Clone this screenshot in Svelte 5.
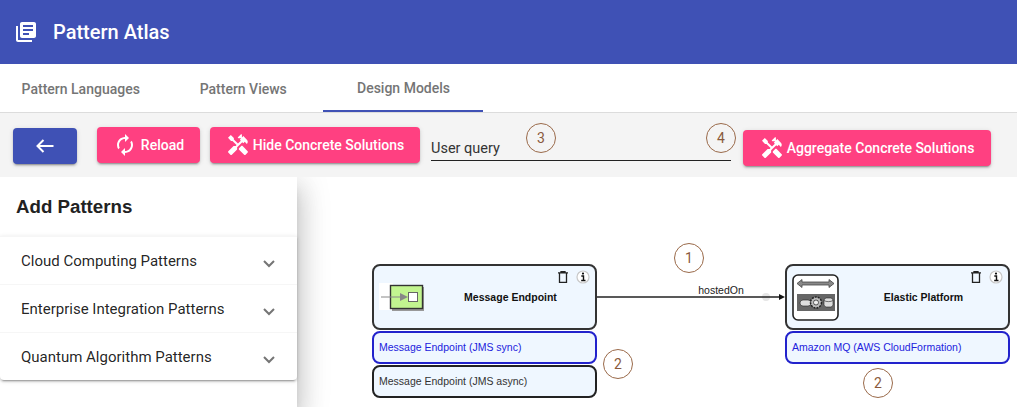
<script>
  const tabs = ['Pattern Languages', 'Pattern Views', 'Design Models']
  const groups = ['Cloud Computing Patterns', 'Enterprise Integration Patterns', 'Quantum Algorithm Patterns']

  const handyman = 'M21.67 18.17l-5.3-5.3h-.99l-2.54 2.54v.99l5.3 5.3c.39.39 1.02.39 1.41 0l2.12-2.12c.39-.38.39-1.02 0-1.41zM17.34 10.19l1.41-1.41 2.12 2.12c1.17-1.17 1.17-3.07 0-4.24l-3.54-3.54-1.41 1.41V1.71l-.7-.71-3.54 3.54.71.71h2.83l-1.41 1.41 1.06 1.06-2.89 2.89-4.13-4.13V5.06L4.83 2.04 2 4.87 5.03 7.9h1.41l4.13 4.13-.85.85H7.6l-5.3 5.3c-.39.39-.39 1.02 0 1.41l2.12 2.12c.39.39 1.02.39 1.41 0l5.3-5.3v-2.12l5.15-5.15 1.06 1.05z'
</script>

{#snippet nodeActions()}
  <div class="node-actions">
    <svg width="10" height="12" viewBox="0 0 10 12"><path d="M0 1.800h10M3 1.800V.5h4v1.300M1.500 1.800v9.500h7V1.800" fill="none" stroke="#222" stroke-width="1.300"/></svg>
    <svg width="14" height="14" viewBox="0 0 14 14"><circle cx="7" cy="7" r="6" fill="#fff" stroke="#c8c8c8" stroke-width="1.200"/><path d="M5.300 6h2.200v4.300M5.200 10.500h4.300" fill="none" stroke="#111" stroke-width="1.400"/><circle cx="7" cy="3.600" r="1.100" fill="#111"/></svg>
  </div>
{/snippet}

<header class="topbar">
  <svg width="24" height="24" viewBox="0 0 24 24" fill="#fff"><path d="M4 6H2v14c0 1.1.9 2 2 2h14v-2H4V6zm16-4H8c-1.1 0-2 .9-2 2v12c0 1.1.9 2 2 2h12c1.1 0 2-.9 2-2V4c0-1.1-.9-2-2-2zm-1 9H9V9h10v2zm-4 4H9v-2h6v2zm4-8H9V5h10v2z"/></svg>
  <span class="title">Pattern Atlas</span>
</header>

<nav class="tabs">
  {#each tabs as tab, i}
    <div class="tab" class:active={i === 2}>{tab}</div>
  {/each}
</nav>

<div class="toolbar">
  <button class="btn back" aria-label="Back">
    <svg width="20" height="16" viewBox="0 0 20 16"><path d="M18.500 8H2.500M8.500 2l-6 6 6 6" fill="none" stroke="#fff" stroke-width="2"/></svg>
  </button>
  <button class="btn pink reload">
    <svg width="24" height="24" viewBox="0 0 24 24" fill="#fff"><path d="M12 6v3l4-4-4-4v3c-4.420 0-8 3.580-8 8 0 1.570.460 3.030 1.240 4.260L6.700 14.800c-.450-.830-.700-1.790-.700-2.800 0-3.310 2.690-6 6-6zm6.760 1.740L17.300 9.200c.440.840.700 1.790.700 2.800 0 3.310-2.690 6-6 6v-3l-4 4 4 4v-3c4.420 0 8-3.580 8-8 0-1.570-.460-3.030-1.240-4.260z"/></svg>
    Reload
  </button>
  <button class="btn pink hide">
    <svg width="24" height="24" viewBox="0 0 24 24" fill="#fff"><path d={handyman}/></svg>
    Hide Concrete Solutions
  </button>
  <div class="query">
    <span>User query</span>
    <div class="step" style="left: 95px; top: -5px">3</div>
    <div class="step" style="left: 275px; top: -5px">4</div>
  </div>
  <button class="btn pink aggregate">
    <svg width="24" height="24" viewBox="0 0 24 24" fill="#fff"><path d={handyman}/></svg>
    Aggregate Concrete Solutions
  </button>
</div>

<main class="workspace">
  <aside class="drawer">
    <h3>Add Patterns</h3>
    <div class="accordion">
      {#each groups as group}
        <div class="panel">
          <span>{group}</span>
          <svg width="12" height="8" viewBox="0 0 12 8"><path d="M1 1l5 5 5-5" fill="none" stroke="#757575" stroke-width="2"/></svg>
        </div>
      {/each}
    </div>
  </aside>

  <!-- diagram canvas, nodes are placed freely -->
  <section class="canvas">
    <svg class="edge" width="1017" height="230" viewBox="0 0 1017 230">
      <circle cx="766" cy="120" r="4" fill="#e6e6e6"/>
      <path d="M596 120H779" stroke="#222" stroke-width="1.300"/>
      <path d="M779 117l6 3-6 3z" fill="#111"/>
      <text x="721" y="117" text-anchor="middle">hostedOn</text>
    </svg>

    <div class="node-group" style="left: 372px; top: 87px">
      <div class="node">
        <svg class="pattern-icon" width="46" height="30" viewBox="0 0 46 30">
          <rect x="0" y="0" width="14" height="27" fill="#fff"/>
          <rect x="13" y="4" width="32" height="24" fill="#999"/>
          <rect x="11.500" y="2.500" width="32" height="23" fill="#c2f590" stroke="#333" stroke-width="1.400"/>
          <path d="M2 14H24" stroke="#888" stroke-width="1"/>
          <path d="M21 10l8 4-8 4z" fill="#888"/>
          <rect x="29.500" y="9.500" width="9" height="9" fill="#fff" stroke="#666"/>
        </svg>
        <b>Message Endpoint</b>
        {@render nodeActions()}
      </div>
      <div class="sub blue">Message Endpoint (JMS sync)</div>
      <div class="sub">Message Endpoint (JMS async)</div>
    </div>

    <div class="node-group" style="left: 785px; top: 87px">
      <div class="node">
        <svg class="pattern-icon elastic" width="47" height="47" viewBox="0 0 47 47">
          <rect x="1" y="1" width="45" height="45" rx="5" fill="#fff" stroke="#222" stroke-width="1.600"/>
          <path d="M5 9.500l5-4v2.500h27V5.500l5 4-5 4V11H10v2.500z" fill="#888" stroke="#444" stroke-width=".8"/>
          <rect x="5" y="20" width="38" height="17" fill="#666"/>
          <rect x="8" y="26" width="11" height="6" rx="3" fill="#ddd" stroke="#222" stroke-width=".6"/>
          <circle cx="24" cy="28.500" r="5.500" fill="#bbb" stroke="#222" stroke-width="1.500" stroke-dasharray="2 1"/>
          <circle cx="24" cy="28.500" r="2.500" fill="#eee" stroke="#333" stroke-width=".8"/>
          <rect x="32" y="24" width="9" height="9" rx="2.500" fill="#ddd" stroke="#222" stroke-width=".6"/>
          <path d="M32 26.500c2 1.500 7 1.500 9 0" fill="none" stroke="#222" stroke-width=".6"/>
        </svg>
        <b>Elastic Platform</b>
        {@render nodeActions()}
      </div>
      <div class="sub blue">Amazon MQ (AWS CloudFormation)</div>
    </div>

    <div class="step" style="left: 674px; top: 66px">1</div>
    <div class="step" style="left: 603px; top: 172px">2</div>
    <div class="step" style="left: 863px; top: 191px">2</div>
  </section>
</main>

<style>
  :global(body) {
    font-family: Roboto, sans-serif;
    overflow: hidden;
    background: #fff;
  }

  .topbar {
    height: 64px;
    background: #3f51b5;
    color: #fff;
    display: flex;
    align-items: center;
    padding-left: 14px;
    gap: 15px;
    box-sizing: border-box;
  }
  .title { font-size: 20px; font-weight: 500; }

  .tabs {
    display: flex;
    height: 49px;
    box-sizing: border-box;
    border-bottom: 1px solid #dcdcdc;
  }
  .tab {
    width: 161.500px;
    height: 48px;
    padding-top: 2px;
    display: flex;
    align-items: center;
    justify-content: center;
    box-sizing: border-box;
    font-size: 14px;
    font-weight: 500;
    color: #757575;
  }
  .tab:first-child { margin-right: 1px; }
  .tab.active { border-bottom: 2px solid #3f51b5; width: 160px; margin-left: -1px; padding-left: 1px; }

  .toolbar {
    height: 64px;
    background: #f4f4f4;
    display: flex;
    align-items: flex-start;
    padding-left: 13px;
    box-sizing: border-box;
  }

  .btn {
    height: 36px;
    border: none;
    border-radius: 4px;
    color: #fff;
    font: 500 14px Roboto, sans-serif;
    display: flex;
    align-items: center;
    justify-content: center;
    padding: 0;
    box-shadow: 0 3px 1px -2px rgba(0,0,0,.2), 0 2px 2px 0 rgba(0,0,0,.14), 0 1px 5px 0 rgba(0,0,0,.12);
  }
  .pink { background: #ff4081; }
  .back { background: #3f51b5; width: 64px; margin-top: 15px; }
  .reload { width: 103px; margin: 14px 0 0 20px; gap: 4px; }
  .hide { width: 210px; margin: 14px 0 0 10px; gap: 3px; }
  .aggregate { width: 248px; margin: 17px 0 0 12px; gap: 3px; }

  .query {
    position: relative;
    width: 300px;
    height: 32px;
    margin: 15px 0 0 11px;
    border-bottom: 1px solid #222;
    font-size: 14.500px;
    color: #333;
    display: flex;
    align-items: flex-end;
  }
  .query span { padding-bottom: 3px; }

  .step {
    position: absolute;
    width: 30px;
    height: 30px;
    border-radius: 50%;
    border: 1px solid #9a6a4a;
    box-sizing: border-box;
    color: #8a5a3c;
    font: 14px Roboto, sans-serif;
    display: flex;
    align-items: center;
    justify-content: center;
  }

  .workspace {
    position: relative;
    height: 230px;
    overflow: hidden;
    background: #fff;
  }

  .drawer {
    position: absolute;
    z-index: 2;
    left: 0;
    top: 0;
    width: 297px;
    height: 100%;
    background: #fff;
    box-shadow: 0 8px 10px -5px rgba(0,0,0,.2), 0 16px 24px 2px rgba(0,0,0,.14), 0 6px 30px 5px rgba(0,0,0,.12);
  }
  .drawer h3 {
    margin: 0;
    padding: 19px 0 0 16px;
    height: 59px;
    box-sizing: border-box;
    font: bold 18.700px "Liberation Sans", sans-serif;
    color: #222;
  }

  .accordion {
    border-radius: 0 0 4px 4px;
    box-shadow: 0 3px 1px -2px rgba(0,0,0,.2), 0 2px 2px 0 rgba(0,0,0,.14), 0 1px 5px 0 rgba(0,0,0,.12);
  }
  .panel {
    height: 48px;
    display: flex;
    align-items: center;
    justify-content: space-between;
    padding: 0 22px 0 21px;
    font-size: 15px;
    color: rgba(0, 0, 0, 0.87);
    border-top: 1px solid #f6f6f6;
    box-sizing: border-box;
  }
  .panel svg { margin-top: 6px; }

  .canvas {
    position: absolute;
    inset: 0;
    font-family: "Liberation Sans", sans-serif;
  }
  .edge { position: absolute; left: 0; top: 0; }
  .edge text { font: 10.500px "Liberation Sans", sans-serif; fill: #222; }

  .node-group {
    position: absolute;
    width: 225px;
    display: flex;
    flex-direction: column;
    gap: 1px;
  }

  .node {
    position: relative;
    height: 66px;
    box-sizing: border-box;
    background: #eff7ff;
    border: 2px solid #333;
    border-radius: 8px;
    display: flex;
    align-items: center;
    justify-content: center;
    font-size: 10.500px;
    color: #111;
    padding: 0 0 1px 52px;
  }
  .pattern-icon { position: absolute; left: 5px; top: 17px; }
  .pattern-icon.elastic { left: 5px; top: 8px; }

  .node-actions {
    position: absolute;
    right: 5px;
    top: 4px;
    display: flex;
    gap: 8px;
    align-items: center;
  }

  .sub {
    height: 33px;
    box-sizing: border-box;
    background: #eff7ff;
    border: 2px solid #222;
    border-radius: 8px;
    display: flex;
    align-items: center;
    padding: 0 0 1px 5px;
    font-size: 10.500px;
    color: #333;
  }
  .sub.blue { border-color: #2222cc; color: #2222dd; }
</style>
